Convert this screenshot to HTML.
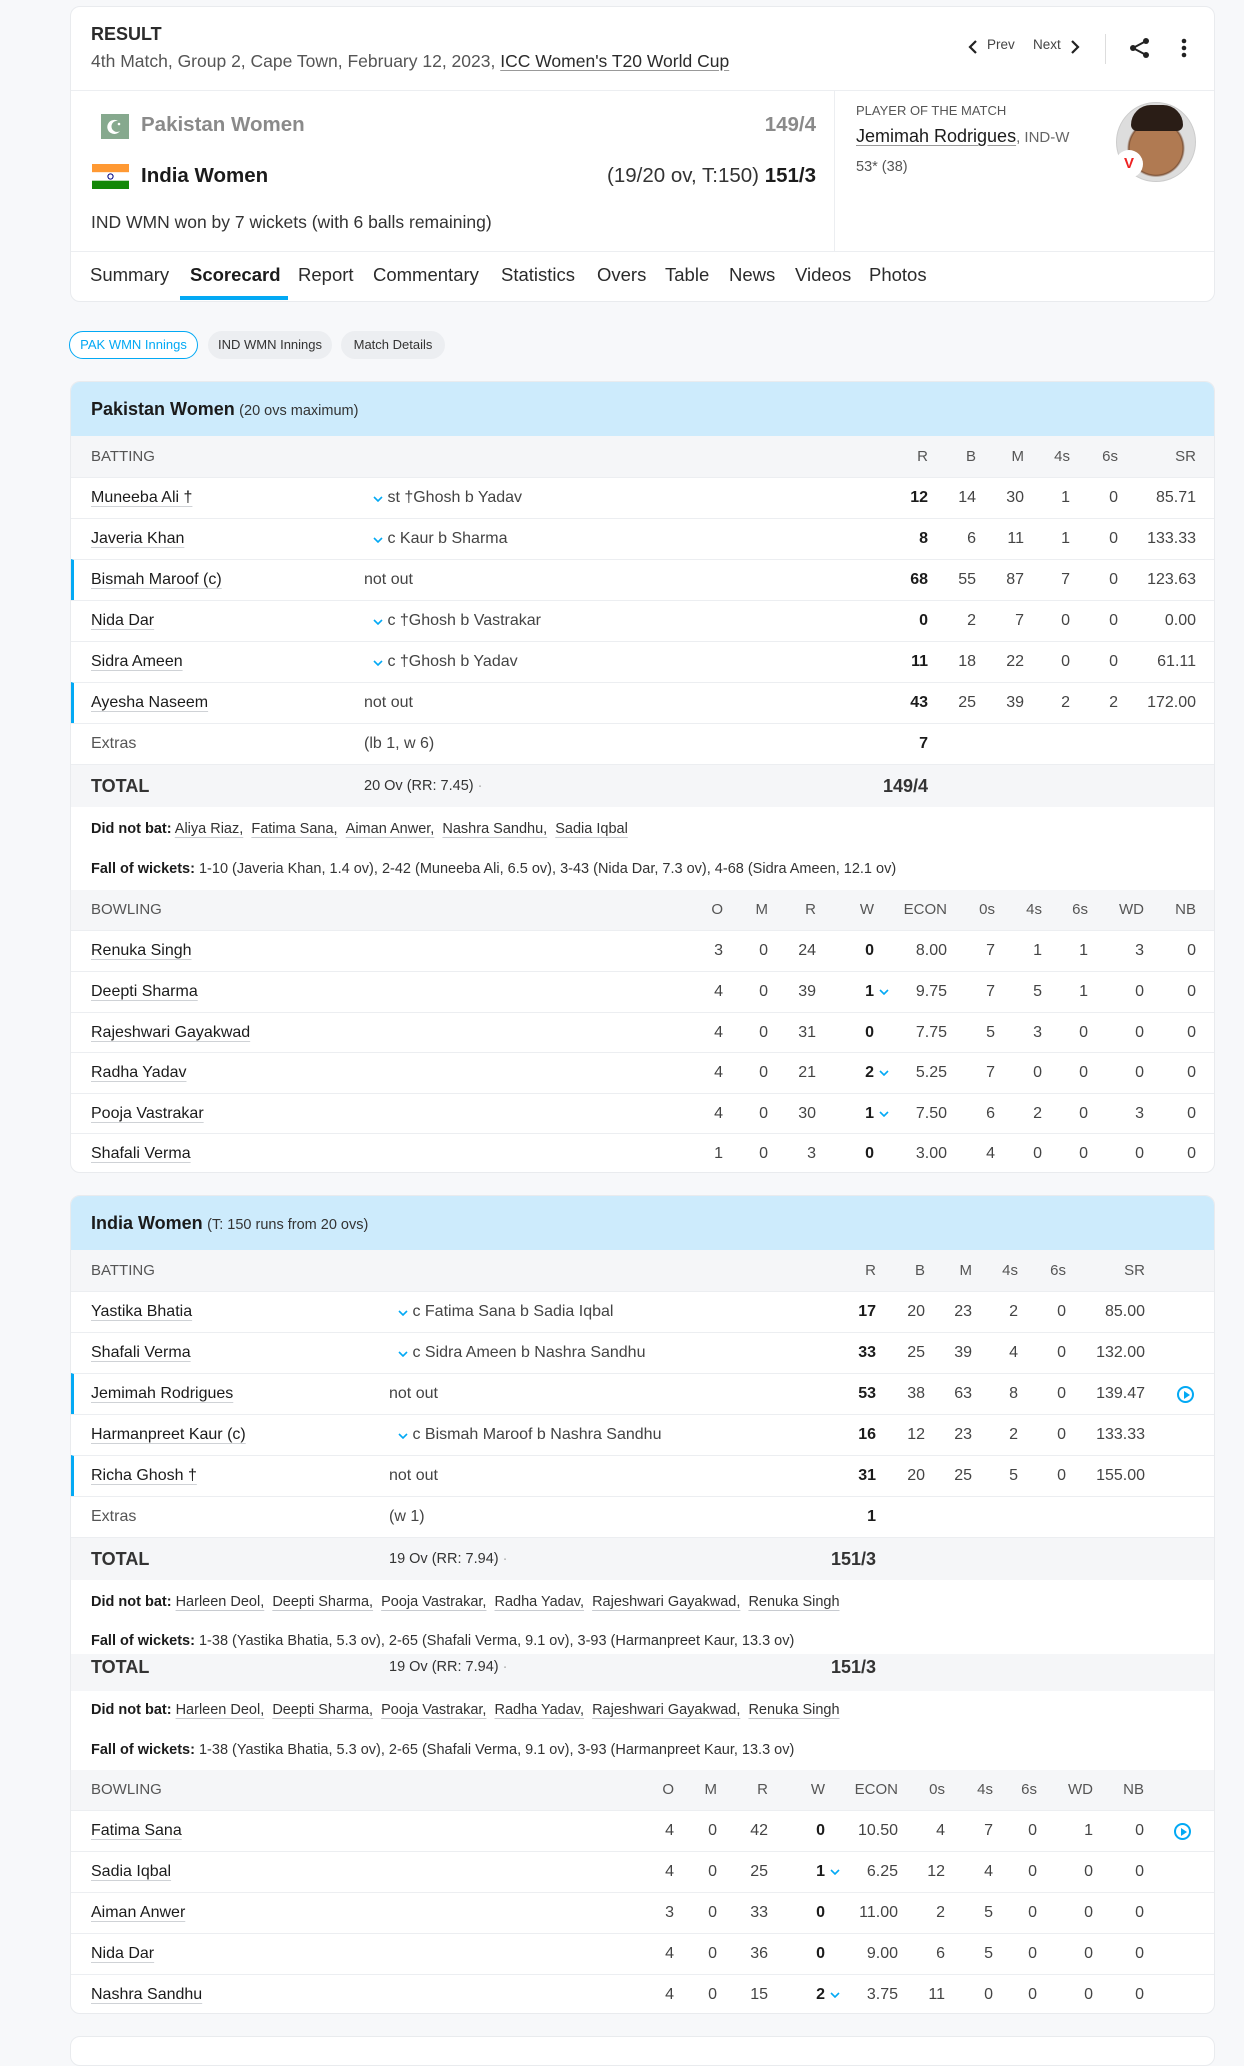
<!DOCTYPE html>
<html><head><meta charset="utf-8">
<style>
*{box-sizing:border-box;margin:0;padding:0}
body{width:1244px;height:2040px;background:#f7f8fa;font-family:"Liberation Sans",Arial,sans-serif;color:#1b1b1b;position:relative;overflow:hidden}
.abs{position:absolute}
.card{position:absolute;left:70px;width:1145px;background:#fff;border:1px solid #e9ebee;border-radius:10px;overflow:hidden}
.hdr{position:absolute;left:0;right:0;height:54px;background:#cdebfc;padding-left:20px;line-height:54px}
.hdr b{font-size:18px}
.hdr span{font-size:14.5px;color:#333}
.th{position:absolute;left:0;right:0;background:#f5f6f8;color:#555;font-size:15px}
.row{position:absolute;left:0;right:0;height:41px;border-top:1px solid #eceef1;font-size:16px;line-height:40px}
.row.no{border-left:3px solid #03a9f4}
.c{position:absolute;top:0;white-space:nowrap;color:#444}
.nm{left:20px;color:#1b1b1b;text-decoration:underline;text-decoration-color:#cfd2d6;text-underline-offset:4px}
.b{font-weight:bold;color:#1b1b1b}
.g{color:#555}
.chv{position:absolute;left:100%;margin-left:5px;top:0}
.tot{position:absolute;left:0;right:0;background:#f5f6f8;border-top:1px solid #eceef1}
.info{position:absolute;left:20px;font-size:14.5px;color:#333;white-space:nowrap}
.info b{color:#1b1b1b}
.info u{text-decoration-color:#c8cbd0;text-underline-offset:4px}
.play{position:absolute;width:17px;height:17px;border:2px solid #03a9f4;border-radius:50%}
.play:after{content:"";position:absolute;left:5px;top:3px;border-left:6px solid #03a9f4;border-top:4px solid transparent;border-bottom:4px solid transparent}
.tab{position:absolute;top:264px;font-size:18.5px;color:#2b2b2b}
.pill{position:absolute;top:331px;height:28px;line-height:26px;border-radius:14px;font-size:13px;text-align:center;background:#eceef1;border:1px solid #eceef1;color:#333}
</style></head><body>
<svg width="0" height="0" style="position:absolute"><defs><symbol id="v" viewBox="0 0 10 6"><path d="M1 1 L5 5 L9 1" fill="none" stroke="#03a9f4" stroke-width="1.6"/></symbol></defs></svg>

<!-- top card -->
<div class="card" style="top:6px;height:296px">
  <div class="abs" style="left:20px;top:17px;font-size:18px;font-weight:bold;color:#2b2b2b">RESULT</div>
  <div class="abs" style="left:20px;top:44px;font-size:17.5px;color:#555;white-space:nowrap">4th Match, Group 2, Cape Town, February 12, 2023, <span style="color:#2b2b2b;text-decoration:underline;text-decoration-color:#999;text-underline-offset:3px">ICC Women's T20 World Cup</span></div>
  <svg class="abs" style="left:896px;top:32px" width="12" height="16" viewBox="0 0 12 16"><path d="M9 2 L3 8 L9 14" fill="none" stroke="#222" stroke-width="2.2"/></svg>
  <div class="abs" style="left:916px;top:30px;font-size:13.5px;color:#444">Prev</div>
  <div class="abs" style="left:962px;top:30px;font-size:13.5px;color:#444">Next</div>
  <svg class="abs" style="left:998px;top:32px" width="12" height="16" viewBox="0 0 12 16"><path d="M3 2 L9 8 L3 14" fill="none" stroke="#222" stroke-width="2.2"/></svg>
  <div class="abs" style="left:1034px;top:27px;width:1px;height:30px;background:#ddd"></div>
  <svg class="abs" style="left:1058px;top:30px" width="22" height="22" viewBox="0 0 22 22"><circle cx="17" cy="4" r="3" fill="#222"/><circle cx="4" cy="11" r="3" fill="#222"/><circle cx="17" cy="18" r="3" fill="#222"/><path d="M17 4 L4 11 L17 18" stroke="#222" stroke-width="2" fill="none"/></svg>
  <svg class="abs" style="left:1110px;top:31px" width="6" height="20"><circle cx="3" cy="3" r="2.3" fill="#222"/><circle cx="3" cy="10" r="2.3" fill="#222"/><circle cx="3" cy="17" r="2.3" fill="#222"/></svg>
  <div class="abs" style="left:0;right:0;top:83px;height:1px;background:#eceef1"></div>
  <div class="abs" style="left:763px;top:84px;width:1px;height:161px;background:#eceef1"></div>
  <!-- teams -->
  <svg class="abs" style="left:30px;top:107px" width="28" height="25" viewBox="0 0 28 25"><rect width="28" height="25" fill="#86a98e"/><path d="M17 7 A7 7 0 1 0 19 17 A5.5 5.5 0 1 1 17 7Z" fill="#fff"/><circle cx="18" cy="10" r="1.3" fill="#fff"/></svg>
  <div class="abs" style="left:70px;top:106px;font-size:20.5px;font-weight:bold;color:#8a8a8a">Pakistan Women</div>
  <div class="abs" style="right:398px;top:106px;font-size:20.5px;font-weight:bold;color:#8a8a8a">149/4</div>
  <svg class="abs" style="left:21px;top:157px" width="37" height="25" viewBox="0 0 37 25"><rect width="37" height="8.3" fill="#ff9933"/><rect y="8.3" width="37" height="8.4" fill="#fff"/><rect y="16.7" width="37" height="8.3" fill="#138808"/><circle cx="18.5" cy="12.5" r="2.6" fill="none" stroke="#000080" stroke-width="1"/></svg>
  <div class="abs" style="left:70px;top:157px;font-size:20.5px;font-weight:bold;color:#1b1b1b">India Women</div>
  <div class="abs" style="right:398px;top:157px;font-size:20.5px;color:#333;white-space:nowrap">(19/20 ov, T:150) <b style="color:#1b1b1b">151/3</b></div>
  <div class="abs" style="left:20px;top:205px;font-size:17.5px;color:#333">IND WMN won by 7 wickets (with 6 balls remaining)</div>
  <!-- POTM -->
  <div class="abs" style="left:785px;top:96px;font-size:13px;color:#555">PLAYER OF THE MATCH</div>
  <div class="abs" style="left:785px;top:119px;font-size:18px;white-space:nowrap"><span style="text-decoration:underline;text-decoration-color:#999;text-underline-offset:3px">Jemimah Rodrigues</span><span style="color:#666;font-size:15px">, IND-W</span></div>
  <div class="abs" style="left:785px;top:152px;font-size:14.5px;color:#555">53* (38)</div>
  <div class="abs" style="left:1045px;top:95px;width:80px;height:80px;border-radius:50%;border:1px solid #ccc;background:radial-gradient(circle at 50% 58%,#b07a52 0 26px,#7a4f33 27px,#ddd 29px 100%);overflow:hidden">
    <div class="abs" style="left:14px;top:2px;width:52px;height:26px;border-radius:26px 26px 8px 8px;background:#2a1d16"></div>
  </div>
  <div class="abs" style="left:1044px;top:143px;width:28px;height:28px;border-radius:50%;background:#fff;color:#e22;font-weight:bold;font-size:15px;text-align:center;line-height:28px">V</div>
  <div class="abs" style="left:0;right:0;top:244px;height:1px;background:#eceef1"></div>
</div>
<!-- tabs -->
<div class="tab" style="left:90px">Summary</div>
<div class="tab" style="left:190px;font-weight:bold;color:#1b1b1b">Scorecard</div>
<div class="tab" style="left:298px">Report</div>
<div class="tab" style="left:373px">Commentary</div>
<div class="tab" style="left:501px">Statistics</div>
<div class="tab" style="left:597px">Overs</div>
<div class="tab" style="left:665px">Table</div>
<div class="tab" style="left:729px">News</div>
<div class="tab" style="left:795px">Videos</div>
<div class="tab" style="left:869px">Photos</div>
<div class="abs" style="left:180px;top:296px;width:108px;height:4px;background:#03a9f4"></div>
<!-- pills -->
<div class="pill" style="left:69px;width:129px;background:#fff;border-color:#03a9f4;color:#03a9f4">PAK WMN Innings</div>
<div class="pill" style="left:208px;width:124px">IND WMN Innings</div>
<div class="pill" style="left:341px;width:104px">Match Details</div>

<!-- PAK card -->
<div class="card" style="top:381px;height:792px">
  <div class="hdr" style="top:0"><b>Pakistan Women</b> <span>(20 ovs maximum)</span></div>
  <div class="th" style="top:54px;height:41px;line-height:41px">
    <span class="c" style="left:20px;color:#555">BATTING</span>
    <span class="c" style="right:286px;color:#555">R</span><span class="c" style="right:238px;color:#555">B</span><span class="c" style="right:190px;color:#555">M</span><span class="c" style="right:144px;color:#555">4s</span><span class="c" style="right:96px;color:#555">6s</span><span class="c" style="right:18px;color:#555">SR</span>
  </div>
  <div class="row" style="top:95px"><span class="c nm">Muneeba Ali †</span><span class="c" style="left:302px"><svg width="10" height="6"><use href="#v"/></svg> st †Ghosh b Yadav</span><span class="c b" style="right:286px">12</span><span class="c" style="right:238px">14</span><span class="c" style="right:190px">30</span><span class="c" style="right:144px">1</span><span class="c" style="right:96px">0</span><span class="c" style="right:18px">85.71</span></div>
  <div class="row" style="top:136px"><span class="c nm">Javeria Khan</span><span class="c" style="left:302px"><svg width="10" height="6"><use href="#v"/></svg> c Kaur b Sharma</span><span class="c b" style="right:286px">8</span><span class="c" style="right:238px">6</span><span class="c" style="right:190px">11</span><span class="c" style="right:144px">1</span><span class="c" style="right:96px">0</span><span class="c" style="right:18px">133.33</span></div>
  <div class="row no" style="top:177px"><span class="c nm" style="left:17px">Bismah Maroof (c)</span><span class="c" style="left:290px">not out</span><span class="c b" style="right:286px">68</span><span class="c" style="right:238px">55</span><span class="c" style="right:190px">87</span><span class="c" style="right:144px">7</span><span class="c" style="right:96px">0</span><span class="c" style="right:18px">123.63</span></div>
  <div class="row" style="top:218px"><span class="c nm">Nida Dar</span><span class="c" style="left:302px"><svg width="10" height="6"><use href="#v"/></svg> c †Ghosh b Vastrakar</span><span class="c b" style="right:286px">0</span><span class="c" style="right:238px">2</span><span class="c" style="right:190px">7</span><span class="c" style="right:144px">0</span><span class="c" style="right:96px">0</span><span class="c" style="right:18px">0.00</span></div>
  <div class="row" style="top:259px"><span class="c nm">Sidra Ameen</span><span class="c" style="left:302px"><svg width="10" height="6"><use href="#v"/></svg> c †Ghosh b Yadav</span><span class="c b" style="right:286px">11</span><span class="c" style="right:238px">18</span><span class="c" style="right:190px">22</span><span class="c" style="right:144px">0</span><span class="c" style="right:96px">0</span><span class="c" style="right:18px">61.11</span></div>
  <div class="row no" style="top:300px"><span class="c nm" style="left:17px">Ayesha Naseem</span><span class="c" style="left:290px">not out</span><span class="c b" style="right:286px">43</span><span class="c" style="right:238px">25</span><span class="c" style="right:190px">39</span><span class="c" style="right:144px">2</span><span class="c" style="right:96px">2</span><span class="c" style="right:18px">172.00</span></div>
  <div class="row" style="top:341px"><span class="c g" style="left:20px">Extras</span><span class="c" style="left:293px">(lb 1, w 6)</span><span class="c b" style="right:286px">7</span></div>
  <div class="tot" style="top:382px;height:43px;line-height:42px"><span class="c b" style="left:20px;font-size:18px;color:#333">TOTAL</span><span class="c" style="left:293px;font-size:14.5px;color:#333">20 Ov (RR: 7.45) <span style="color:#aaa">·</span></span><span class="c b" style="right:286px;font-size:18px;color:#333">149/4</span></div>
  <div class="info" style="top:439px"><b>Did not bat:</b> <u>Aliya Riaz,</u> &nbsp;<u>Fatima Sana,</u> &nbsp;<u>Aiman Anwer,</u> &nbsp;<u>Nashra Sandhu,</u> &nbsp;<u>Sadia Iqbal</u></div>
  <div class="info" style="top:479px"><b>Fall of wickets:</b> 1-10 (Javeria Khan, 1.4 ov), 2-42 (Muneeba Ali, 6.5 ov), 3-43 (Nida Dar, 7.3 ov), 4-68 (Sidra Ameen, 12.1 ov)</div>
  <div class="th" style="top:508px;height:40px;line-height:40px">
    <span class="c" style="left:20px;color:#555">BOWLING</span>
    <span class="c" style="right:491px;color:#555">O</span><span class="c" style="right:446px;color:#555">M</span><span class="c" style="right:398px;color:#555">R</span><span class="c" style="right:340px;color:#555">W</span><span class="c" style="right:267px;color:#555">ECON</span><span class="c" style="right:219px;color:#555">0s</span><span class="c" style="right:172px;color:#555">4s</span><span class="c" style="right:126px;color:#555">6s</span><span class="c" style="right:70px;color:#555">WD</span><span class="c" style="right:18px;color:#555">NB</span>
  </div>
  <div class="row" style="top:548px"><span class="c nm">Renuka Singh</span><span class="c" style="right:491px">3</span><span class="c" style="right:446px">0</span><span class="c" style="right:398px">24</span><span class="c b" style="right:340px">0</span><span class="c" style="right:267px">8.00</span><span class="c" style="right:219px">7</span><span class="c" style="right:172px">1</span><span class="c" style="right:126px">1</span><span class="c" style="right:70px">3</span><span class="c" style="right:18px">0</span></div>
  <div class="row" style="top:589px"><span class="c nm">Deepti Sharma</span><span class="c" style="right:491px">4</span><span class="c" style="right:446px">0</span><span class="c" style="right:398px">39</span><span class="c b" style="right:340px">1<svg class="chv" style="top:17px" width="10" height="6"><use href="#v"/></svg></span><span class="c" style="right:267px">9.75</span><span class="c" style="right:219px">7</span><span class="c" style="right:172px">5</span><span class="c" style="right:126px">1</span><span class="c" style="right:70px">0</span><span class="c" style="right:18px">0</span></div>
  <div class="row" style="top:630px"><span class="c nm">Rajeshwari Gayakwad</span><span class="c" style="right:491px">4</span><span class="c" style="right:446px">0</span><span class="c" style="right:398px">31</span><span class="c b" style="right:340px">0</span><span class="c" style="right:267px">7.75</span><span class="c" style="right:219px">5</span><span class="c" style="right:172px">3</span><span class="c" style="right:126px">0</span><span class="c" style="right:70px">0</span><span class="c" style="right:18px">0</span></div>
  <div class="row" style="top:670px"><span class="c nm">Radha Yadav</span><span class="c" style="right:491px">4</span><span class="c" style="right:446px">0</span><span class="c" style="right:398px">21</span><span class="c b" style="right:340px">2<svg class="chv" style="top:17px" width="10" height="6"><use href="#v"/></svg></span><span class="c" style="right:267px">5.25</span><span class="c" style="right:219px">7</span><span class="c" style="right:172px">0</span><span class="c" style="right:126px">0</span><span class="c" style="right:70px">0</span><span class="c" style="right:18px">0</span></div>
  <div class="row" style="top:711px"><span class="c nm">Pooja Vastrakar</span><span class="c" style="right:491px">4</span><span class="c" style="right:446px">0</span><span class="c" style="right:398px">30</span><span class="c b" style="right:340px">1<svg class="chv" style="top:17px" width="10" height="6"><use href="#v"/></svg></span><span class="c" style="right:267px">7.50</span><span class="c" style="right:219px">6</span><span class="c" style="right:172px">2</span><span class="c" style="right:126px">0</span><span class="c" style="right:70px">3</span><span class="c" style="right:18px">0</span></div>
  <div class="row" style="top:751px"><span class="c nm">Shafali Verma</span><span class="c" style="right:491px">1</span><span class="c" style="right:446px">0</span><span class="c" style="right:398px">3</span><span class="c b" style="right:340px">0</span><span class="c" style="right:267px">3.00</span><span class="c" style="right:219px">4</span><span class="c" style="right:172px">0</span><span class="c" style="right:126px">0</span><span class="c" style="right:70px">0</span><span class="c" style="right:18px">0</span></div>
</div>

<!-- IND card -->
<div class="card" style="top:1195px;height:819px">
  <div class="hdr" style="top:0"><b>India Women</b> <span>(T: 150 runs from 20 ovs)</span></div>
  <div class="th" style="top:54px;height:41px;line-height:41px">
    <span class="c" style="left:20px;color:#555">BATTING</span>
    <span class="c" style="right:338px;color:#555">R</span><span class="c" style="right:289px;color:#555">B</span><span class="c" style="right:242px;color:#555">M</span><span class="c" style="right:196px;color:#555">4s</span><span class="c" style="right:148px;color:#555">6s</span><span class="c" style="right:69px;color:#555">SR</span>
  </div>
  <div class="row" style="top:95px"><span class="c nm">Yastika Bhatia</span><span class="c" style="left:327px"><svg width="10" height="6"><use href="#v"/></svg> c Fatima Sana b Sadia Iqbal</span><span class="c b" style="right:338px">17</span><span class="c" style="right:289px">20</span><span class="c" style="right:242px">23</span><span class="c" style="right:196px">2</span><span class="c" style="right:148px">0</span><span class="c" style="right:69px">85.00</span></div>
  <div class="row" style="top:136px"><span class="c nm">Shafali Verma</span><span class="c" style="left:327px"><svg width="10" height="6"><use href="#v"/></svg> c Sidra Ameen b Nashra Sandhu</span><span class="c b" style="right:338px">33</span><span class="c" style="right:289px">25</span><span class="c" style="right:242px">39</span><span class="c" style="right:196px">4</span><span class="c" style="right:148px">0</span><span class="c" style="right:69px">132.00</span></div>
  <div class="row no" style="top:177px"><span class="c nm" style="left:17px">Jemimah Rodrigues</span><span class="c" style="left:315px">not out</span><span class="c b" style="right:338px">53</span><span class="c" style="right:289px">38</span><span class="c" style="right:242px">63</span><span class="c" style="right:196px">8</span><span class="c" style="right:148px">0</span><span class="c" style="right:69px">139.47</span><span class="play" style="left:1103px;top:12px"></span></div>
  <div class="row" style="top:218px"><span class="c nm">Harmanpreet Kaur (c)</span><span class="c" style="left:327px"><svg width="10" height="6"><use href="#v"/></svg> c Bismah Maroof b Nashra Sandhu</span><span class="c b" style="right:338px">16</span><span class="c" style="right:289px">12</span><span class="c" style="right:242px">23</span><span class="c" style="right:196px">2</span><span class="c" style="right:148px">0</span><span class="c" style="right:69px">133.33</span></div>
  <div class="row no" style="top:259px"><span class="c nm" style="left:17px">Richa Ghosh †</span><span class="c" style="left:315px">not out</span><span class="c b" style="right:338px">31</span><span class="c" style="right:289px">20</span><span class="c" style="right:242px">25</span><span class="c" style="right:196px">5</span><span class="c" style="right:148px">0</span><span class="c" style="right:69px">155.00</span></div>
  <div class="row" style="top:300px"><span class="c g" style="left:20px">Extras</span><span class="c" style="left:318px">(w 1)</span><span class="c b" style="right:338px">1</span></div>
  <div class="tot" style="top:341px;height:43px;line-height:42px"><span class="c b" style="left:20px;font-size:18px;color:#333">TOTAL</span><span class="c" style="left:318px;font-size:14.5px;color:#333">19 Ov (RR: 7.94) <span style="color:#aaa">·</span></span><span class="c b" style="right:338px;font-size:18px;color:#333">151/3</span></div>
  <div class="info" style="top:398px"><b>Did not bat:</b> <u>Harleen Deol,</u> &nbsp;<u>Deepti Sharma,</u> &nbsp;<u>Pooja Vastrakar,</u> &nbsp;<u>Radha Yadav,</u> &nbsp;<u>Rajeshwari Gayakwad,</u> &nbsp;<u>Renuka Singh</u></div>
  <div class="tot" style="top:458px;height:37px;line-height:26px;border-top:none"><span class="c b" style="left:20px;font-size:18px;color:#333">TOTAL</span><span class="c" style="left:318px;font-size:14.5px;color:#333">19 Ov (RR: 7.94) <span style="color:#aaa">·</span></span><span class="c b" style="right:338px;font-size:18px;color:#333">151/3</span></div>
  <div class="info" style="top:437px"><b>Fall of wickets:</b> 1-38 (Yastika Bhatia, 5.3 ov), 2-65 (Shafali Verma, 9.1 ov), 3-93 (Harmanpreet Kaur, 13.3 ov)</div>
  <div class="info" style="top:506px"><b>Did not bat:</b> <u>Harleen Deol,</u> &nbsp;<u>Deepti Sharma,</u> &nbsp;<u>Pooja Vastrakar,</u> &nbsp;<u>Radha Yadav,</u> &nbsp;<u>Rajeshwari Gayakwad,</u> &nbsp;<u>Renuka Singh</u></div>
  <div class="info" style="top:546px"><b>Fall of wickets:</b> 1-38 (Yastika Bhatia, 5.3 ov), 2-65 (Shafali Verma, 9.1 ov), 3-93 (Harmanpreet Kaur, 13.3 ov)</div>
  <div class="th" style="top:574px;height:40px;line-height:40px">
    <span class="c" style="left:20px;color:#555">BOWLING</span>
    <span class="c" style="right:540px;color:#555">O</span><span class="c" style="right:497px;color:#555">M</span><span class="c" style="right:446px;color:#555">R</span><span class="c" style="right:389px;color:#555">W</span><span class="c" style="right:316px;color:#555">ECON</span><span class="c" style="right:269px;color:#555">0s</span><span class="c" style="right:221px;color:#555">4s</span><span class="c" style="right:177px;color:#555">6s</span><span class="c" style="right:121px;color:#555">WD</span><span class="c" style="right:70px;color:#555">NB</span>
  </div>
  <div class="row" style="top:614px"><span class="c nm">Fatima Sana</span><span class="c" style="right:540px">4</span><span class="c" style="right:497px">0</span><span class="c" style="right:446px">42</span><span class="c b" style="right:389px">0</span><span class="c" style="right:316px">10.50</span><span class="c" style="right:269px">4</span><span class="c" style="right:221px">7</span><span class="c" style="right:177px">0</span><span class="c" style="right:121px">1</span><span class="c" style="right:70px">0</span><span class="play" style="left:1103px;top:12px"></span></div>
  <div class="row" style="top:655px"><span class="c nm">Sadia Iqbal</span><span class="c" style="right:540px">4</span><span class="c" style="right:497px">0</span><span class="c" style="right:446px">25</span><span class="c b" style="right:389px">1<svg class="chv" style="top:17px" width="10" height="6"><use href="#v"/></svg></span><span class="c" style="right:316px">6.25</span><span class="c" style="right:269px">12</span><span class="c" style="right:221px">4</span><span class="c" style="right:177px">0</span><span class="c" style="right:121px">0</span><span class="c" style="right:70px">0</span></div>
  <div class="row" style="top:696px"><span class="c nm">Aiman Anwer</span><span class="c" style="right:540px">3</span><span class="c" style="right:497px">0</span><span class="c" style="right:446px">33</span><span class="c b" style="right:389px">0</span><span class="c" style="right:316px">11.00</span><span class="c" style="right:269px">2</span><span class="c" style="right:221px">5</span><span class="c" style="right:177px">0</span><span class="c" style="right:121px">0</span><span class="c" style="right:70px">0</span></div>
  <div class="row" style="top:737px"><span class="c nm">Nida Dar</span><span class="c" style="right:540px">4</span><span class="c" style="right:497px">0</span><span class="c" style="right:446px">36</span><span class="c b" style="right:389px">0</span><span class="c" style="right:316px">9.00</span><span class="c" style="right:269px">6</span><span class="c" style="right:221px">5</span><span class="c" style="right:177px">0</span><span class="c" style="right:121px">0</span><span class="c" style="right:70px">0</span></div>
  <div class="row" style="top:778px"><span class="c nm">Nashra Sandhu</span><span class="c" style="right:540px">4</span><span class="c" style="right:497px">0</span><span class="c" style="right:446px">15</span><span class="c b" style="right:389px">2<svg class="chv" style="top:17px" width="10" height="6"><use href="#v"/></svg></span><span class="c" style="right:316px">3.75</span><span class="c" style="right:269px">11</span><span class="c" style="right:221px">0</span><span class="c" style="right:177px">0</span><span class="c" style="right:121px">0</span><span class="c" style="right:70px">0</span></div>
</div>
<div class="card" style="top:2036px;height:30px"></div>
</body></html>
